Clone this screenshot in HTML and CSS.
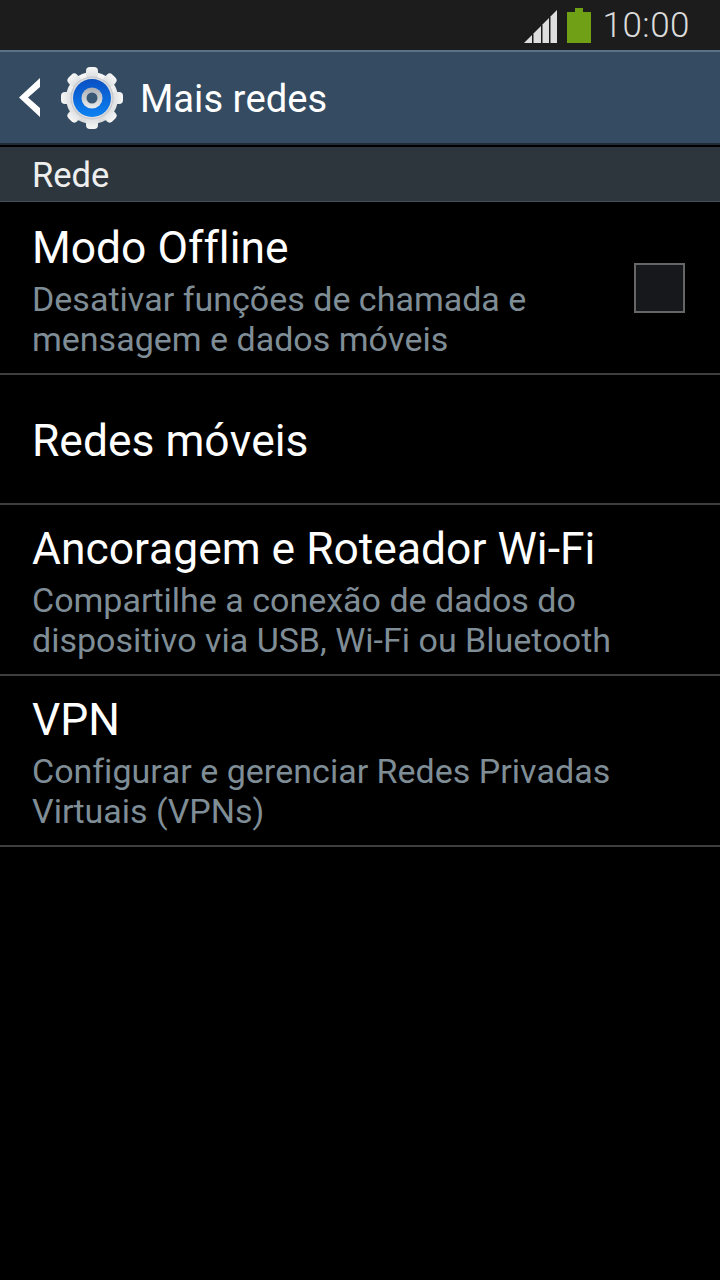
FILE: index.html
```html
<!DOCTYPE html>
<html lang="pt-br">
<head>
    <meta charset="UTF-8">
    <meta name="viewport" content="width=device-width, initial-scale=1.0">
    <title>Mais redes</title>
    <link rel="stylesheet" href="styles.css">
</head>
<body>
    <!-- Barra de status -->
    <div class="status-bar">
        <svg class="signal" width="34" height="34" viewBox="0 0 34 34">
            <path d="M0 33 L8 25 V33 Z" fill="#dedede"/>
            <path d="M9.500 23.500 L17 16 V33 H9.500 Z" fill="#dedede"/>
            <path d="M18.500 14.500 L25 8 V33 H18.500 Z" fill="#dedede"/>
            <path d="M26.500 6.500 L33 0 V33 H26.500 Z" fill="#dedede"/>
        </svg>
        <svg class="battery" width="24" height="35" viewBox="0 0 24 35">
            <path d="M8 0 H16 V4 H24 V35 H0 V4 H8 Z" fill="#6fa015"/>
        </svg>
        <span class="clock">10:00</span>
    </div>

    <!-- Cabeçalho -->
    <div class="action-bar">
        <svg class="back" width="24" height="40" viewBox="0 0 24 40">
            <path d="M22 0 V9 L10 19.500 L22 30 V39 L1 19.500 Z" fill="#fff"/>
        </svg>
        <svg class="gear" width="62" height="62" viewBox="0 0 62 62">
            <defs>
                <linearGradient id="gearFill" x1="0" y1="0" x2="0" y2="1">
                    <stop offset="0" stop-color="#f7f7f7"/>
                    <stop offset="1" stop-color="#d8dadc"/>
                </linearGradient>
                <linearGradient id="blueRing" x1="0" y1="0" x2="0" y2="1">
                    <stop offset="0" stop-color="#0a50c4"/>
                    <stop offset="1" stop-color="#0c82f2"/>
                </linearGradient>
                <linearGradient id="innerRing" x1="0" y1="0" x2="0" y2="1">
                    <stop offset="0" stop-color="#a9adb3"/>
                    <stop offset="1" stop-color="#eceded"/>
                </linearGradient>
            </defs>
            <g fill="url(#gearFill)">
                <circle cx="31" cy="31" r="26"/>
                <rect x="25" y="0" width="12" height="12" rx="4"/>
                <rect x="25" y="0" width="12" height="12" rx="4" transform="rotate(45 31 31)"/>
                <rect x="25" y="0" width="12" height="12" rx="4" transform="rotate(90 31 31)"/>
                <rect x="25" y="0" width="12" height="12" rx="4" transform="rotate(135 31 31)"/>
                <rect x="25" y="0" width="12" height="12" rx="4" transform="rotate(180 31 31)"/>
                <rect x="25" y="0" width="12" height="12" rx="4" transform="rotate(225 31 31)"/>
                <rect x="25" y="0" width="12" height="12" rx="4" transform="rotate(270 31 31)"/>
                <rect x="25" y="0" width="12" height="12" rx="4" transform="rotate(315 31 31)"/>
            </g>
            <circle cx="31" cy="31" r="21.500" fill="#c3c6cb"/>
            <circle cx="31" cy="31" r="20.500" fill="#d9dbde"/>
            <circle cx="31" cy="31" r="19" fill="url(#blueRing)"/>
            <circle cx="31" cy="31" r="10.500" fill="url(#innerRing)"/>
            <circle cx="31" cy="31" r="5.500" fill="#3a5874"/>
        </svg>
        <span class="action-title">Mais redes</span>
    </div>

    <div class="section-header">Rede</div>

    <!-- Lista de opções -->
    <div class="list">
        <div class="row row-check">
            <div class="row-text">
                <div class="row-title">Modo Offline</div>
                <div class="row-sub">Desativar funções de chamada e<br>mensagem e dados móveis</div>
            </div>
            <div class="checkbox"></div>
        </div>
        <div class="row row-single">
            <div class="row-title">Redes móveis</div>
        </div>
        <div class="row">
            <div class="row-text">
                <div class="row-title">Ancoragem e Roteador Wi-Fi</div>
                <div class="row-sub">Compartilhe a conexão de dados do<br>dispositivo via USB, Wi-Fi ou Bluetooth</div>
            </div>
        </div>
        <div class="row">
            <div class="row-text">
                <div class="row-title">VPN</div>
                <div class="row-sub">Configurar e gerenciar Redes Privadas<br>Virtuais (VPNs)</div>
            </div>
        </div>
    </div>
</body>
</html>
```

FILE: styles.css
```css
body {
    margin: 0;
    background: #000;
    font-family: Roboto, 'Noto Sans', sans-serif;
    font-kerning: none;
    font-variant-ligatures: none;
    color: #fff;
    min-height: 1280px;
}
.status-bar {
    height: 50px;
    background: #1c1c1c;
    display: flex;
    align-items: center;
    justify-content: flex-end;
    padding-right: 30px;
    box-sizing: border-box;
}
.signal {
    margin-right: 9px;
    margin-top: 3px;
}
.battery {
    margin-right: 11px;
    margin-top: 1px;
}
.clock {
    font-size: 35px;
    font-weight: 300;
    color: #dcdcdc;
    letter-spacing: 0.5px;
}
.action-bar {
    height: 95px;
    box-sizing: border-box;
    background: #344b62;
    border-top: 2px solid #5a7288;
    border-bottom: 2px solid #1f2c38;
    display: flex;
    align-items: center;
    padding-left: 18px;
}
.back {
    margin-right: 19px;
}
.gear {
    margin-right: 17px;
}
.action-title {
    font-size: 38.2px;
    color: #fff;
    padding-top: 2px;
}
.section-header {
    height: 55px;
    margin-top: 2px;
    box-sizing: border-box;
    background: #2d363d;
    border-bottom: 1px solid #46505a;
    padding-left: 32px;
    font-size: 34.5px;
    line-height: 56px;
    color: #eee;
}
.row {
    height: 171px;
    box-sizing: border-box;
    border-bottom: 2px solid #3e3e3e;
    padding: 16px 33px 0 32px;
    display: flex;
    justify-content: space-between;
}
.row-check {
    height: 173px;
    padding-top: 18px;
}
.row-single {
    height: 130px;
    align-items: center;
    padding-top: 4px;
}
.row-title {
    font-size: 44.4px;
    line-height: 56px;
}
.row-sub {
    font-size: 34px;
    line-height: 40px;
    color: #7f8d96;
    margin-top: 3px;
}
.checkbox {
    width: 51px;
    height: 50px;
    box-sizing: border-box;
    border: 2px solid #666;
    background: #16181b;
    margin: 43px 2px 0 0;
}
```
